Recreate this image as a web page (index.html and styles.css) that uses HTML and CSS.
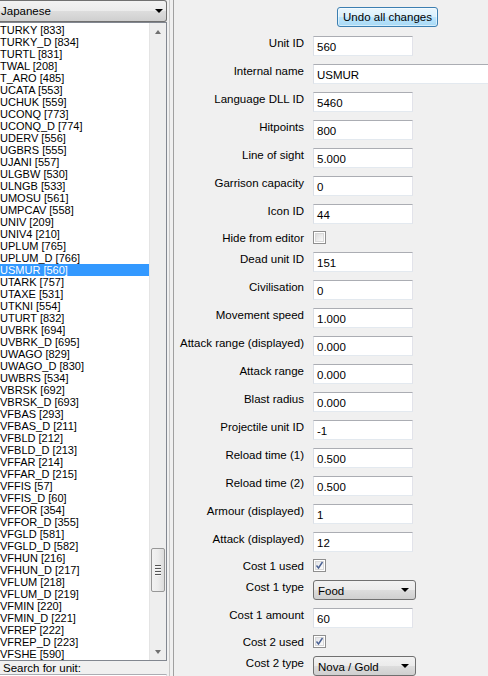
FILE: index.html
```html
<!DOCTYPE html>
<html>
<head>
<meta charset="utf-8">
<link rel="stylesheet" href="styles.css">
</head>
<body>
<div class="app">
  <div class="left">
    <div class="combo lang">
      <span class="combo-text">Japanese</span>
      <span class="arrow"></span>
    </div>
    <div class="list">
      <div class="items">
        <div class="item">TURKY [833]</div>
        <div class="item">TURKY_D [834]</div>
        <div class="item">TURTL [831]</div>
        <div class="item">TWAL [208]</div>
        <div class="item">T_ARO [485]</div>
        <div class="item">UCATA [553]</div>
        <div class="item">UCHUK [559]</div>
        <div class="item">UCONQ [773]</div>
        <div class="item">UCONQ_D [774]</div>
        <div class="item">UDERV [556]</div>
        <div class="item">UGBRS [555]</div>
        <div class="item">UJANI [557]</div>
        <div class="item">ULGBW [530]</div>
        <div class="item">ULNGB [533]</div>
        <div class="item">UMOSU [561]</div>
        <div class="item">UMPCAV [558]</div>
        <div class="item">UNIV [209]</div>
        <div class="item">UNIV4 [210]</div>
        <div class="item">UPLUM [765]</div>
        <div class="item">UPLUM_D [766]</div>
        <div class="item selected">USMUR [560]</div>
        <div class="item">UTARK [757]</div>
        <div class="item">UTAXE [531]</div>
        <div class="item">UTKNI [554]</div>
        <div class="item">UTURT [832]</div>
        <div class="item">UVBRK [694]</div>
        <div class="item">UVBRK_D [695]</div>
        <div class="item">UWAGO [829]</div>
        <div class="item">UWAGO_D [830]</div>
        <div class="item">UWBRS [534]</div>
        <div class="item">VBRSK [692]</div>
        <div class="item">VBRSK_D [693]</div>
        <div class="item">VFBAS [293]</div>
        <div class="item">VFBAS_D [211]</div>
        <div class="item">VFBLD [212]</div>
        <div class="item">VFBLD_D [213]</div>
        <div class="item">VFFAR [214]</div>
        <div class="item">VFFAR_D [215]</div>
        <div class="item">VFFIS [57]</div>
        <div class="item">VFFIS_D [60]</div>
        <div class="item">VFFOR [354]</div>
        <div class="item">VFFOR_D [355]</div>
        <div class="item">VFGLD [581]</div>
        <div class="item">VFGLD_D [582]</div>
        <div class="item">VFHUN [216]</div>
        <div class="item">VFHUN_D [217]</div>
        <div class="item">VFLUM [218]</div>
        <div class="item">VFLUM_D [219]</div>
        <div class="item">VFMIN [220]</div>
        <div class="item">VFMIN_D [221]</div>
        <div class="item">VFREP [222]</div>
        <div class="item">VFREP_D [223]</div>
        <div class="item">VFSHE [590]</div>
      </div>
      <div class="scrollbar">
        <div class="sb-btn"><span class="tri-up"></span></div>
        <div class="sb-track">
          <div class="thumb">
            <span class="grip"></span><span class="grip"></span><span class="grip"></span><span class="grip"></span>
          </div>
        </div>
        <div class="sb-btn"><span class="tri-down"></span></div>
      </div>
    </div>
    <div class="search-label">Search for unit:</div>
    <div class="search-box"></div>
  </div>
  <div class="splitter"></div>
  <div class="right">
    <div class="btn-row"><div class="button">Undo all changes</div></div>
    <div class="form">
      <div class="lbl">Unit ID</div><div class="field">560</div>
      <div class="lbl">Internal name</div><div class="field wide">USMUR</div>
      <div class="lbl">Language DLL ID</div><div class="field">5460</div>
      <div class="lbl">Hitpoints</div><div class="field">800</div>
      <div class="lbl">Line of sight</div><div class="field">5.000</div>
      <div class="lbl">Garrison capacity</div><div class="field">0</div>
      <div class="lbl">Icon ID</div><div class="field">44</div>
      <div class="lbl chk-lbl">Hide from editor</div><div class="chk-cell"><span class="check"></span></div>
      <div class="lbl">Dead unit ID</div><div class="field">151</div>
      <div class="lbl">Civilisation</div><div class="field">0</div>
      <div class="lbl">Movement speed</div><div class="field">1.000</div>
      <div class="lbl">Attack range (displayed)</div><div class="field">0.000</div>
      <div class="lbl">Attack range</div><div class="field">0.000</div>
      <div class="lbl">Blast radius</div><div class="field">0.000</div>
      <div class="lbl">Projectile unit ID</div><div class="field">-1</div>
      <div class="lbl">Reload time (1)</div><div class="field">0.500</div>
      <div class="lbl">Reload time (2)</div><div class="field">0.500</div>
      <div class="lbl">Armour (displayed)</div><div class="field">1</div>
      <div class="lbl">Attack (displayed)</div><div class="field">12</div>
      <div class="lbl chk-lbl">Cost 1 used</div><div class="chk-cell"><span class="check on"><svg width="11" height="11" viewBox="0 0 11 11"><polyline points="2.5,5.5 4.5,8 8.5,2" fill="none" stroke="#4a6193" stroke-width="1.4"/></svg></span></div>
      <div class="lbl">Cost 1 type</div><div class="combo small"><span class="combo-text">Food</span><span class="arrow"></span></div>
      <div class="lbl">Cost 1 amount</div><div class="field">60</div>
      <div class="lbl chk-lbl">Cost 2 used</div><div class="chk-cell"><span class="check on"><svg width="11" height="11" viewBox="0 0 11 11"><polyline points="2.5,5.5 4.5,8 8.5,2" fill="none" stroke="#4a6193" stroke-width="1.4"/></svg></span></div>
      <div class="lbl">Cost 2 type</div><div class="combo small"><span class="combo-text">Nova / Gold</span><span class="arrow"></span></div>
    </div>
  </div>
</div>
</body>
</html>
```
FILE: styles.css
```css
html, body {
  margin: 0;
  padding: 0;
  width: 488px;
  height: 676px;
  overflow: hidden;
  background: #f0f0f0;
  font-family: "Liberation Sans", Arial, sans-serif;
  color: #000;
}
.app {
  display: flex;
  height: 676px;
  overflow: hidden;
}
.left {
  width: 167px;
  flex: none;
  display: flex;
  flex-direction: column;
}
.combo {
  box-sizing: border-box;
  display: flex;
  align-items: center;
  justify-content: space-between;
  border: 1px solid #707070;
  border-radius: 3px;
  background: linear-gradient(#f2f2f2 0%, #ebebeb 50%, #dddddd 50%, #cfcfcf 100%);
  font-size: 11.5px;
}
.combo .arrow {
  width: 0;
  height: 0;
  border-left: 4px solid transparent;
  border-right: 4px solid transparent;
  border-top: 4px solid #000;
}
.lang {
  height: 22px;
  border-left: none;
  border-radius: 0 3px 3px 0;
  padding: 0 3px 0 1px;
  font-size: 11.5px;
}
.list {
  box-sizing: border-box;
  height: 639px;
  border: 1px solid #828790;
  border-left: none;
  background: #fff;
  display: flex;
  overflow: hidden;
}
.items {
  width: 149px;
  padding-top: 1px;
  overflow: hidden;
}
.item {
  height: 12px;
  line-height: 12px;
  font-size: 11px;
  white-space: nowrap;
  padding-left: 0;
}
.item.selected {
  background: #3399ff;
  color: #fff;
}
.scrollbar {
  width: 17px;
  flex: none;
  display: flex;
  flex-direction: column;
  background: #eeeeee;
  border-left: 1px solid #e4e4e4;
  box-sizing: border-box;
}
.sb-btn {
  height: 17px;
  flex: none;
  display: flex;
  align-items: center;
  justify-content: center;
}
.tri-up {
  width: 0;
  height: 0;
  border-left: 3.5px solid transparent;
  border-right: 3.5px solid transparent;
  border-bottom: 4px solid #707070;
}
.tri-down {
  width: 0;
  height: 0;
  border-left: 3.5px solid transparent;
  border-right: 3.5px solid transparent;
  border-top: 4px solid #707070;
}
.sb-track {
  flex: 1;
  display: flex;
  flex-direction: column;
  justify-content: flex-end;
  padding-bottom: 51px;
}
.thumb {
  box-sizing: border-box;
  height: 44px;
  margin: 0 1px 0 1px;
  border: 1px solid #979797;
  border-radius: 2px;
  background: linear-gradient(90deg, #f2f2f2 0%, #ececec 50%, #dcdcdc 100%);
  display: flex;
  flex-direction: column;
  align-items: center;
  justify-content: center;
  gap: 1px;
}
.grip {
  width: 6px;
  height: 1px;
  background: #555;
  border-bottom: 1px solid #f8f8f8;
}
.search-label {
  height: 12px;
  line-height: 12px;
  font-size: 11.5px;
  padding-left: 3px;
  margin-top: 1px;
}
.search-box {
  flex: 1;
  border-top: 1px solid #abadb3;
  border-right: 1px solid #dbdfe6;
  background: #fff;
}
.splitter {
  width: 6px;
  flex: none;
  box-sizing: border-box;
  border-left: 2px solid #f0f0f0;
  background: linear-gradient(90deg, #c8c8c8 0, #c8c8c8 1px, #f0f0f0 1px);
}
.right {
  flex: 1;
  border-left: 1px solid #a0a0a0;
  padding-top: 7px;
  min-width: 0;
  overflow: hidden;
}
.btn-row {
  display: flex;
  padding-left: 163px;
}
.button {
  box-sizing: border-box;
  width: 101px;
  height: 20px;
  border: 1px solid #3c7fb1;
  border-radius: 3px;
  background: linear-gradient(#eaf6fd 0%, #d9f0fc 50%, #bee6fd 50%, #a7d9f5 100%);
  font-size: 11.5px;
  line-height: 18px;
  text-align: center;
  box-shadow: inset 0 0 0 1px rgba(255,255,255,0.5);
}
.form {
  margin-top: 9px;
  display: grid;
  grid-template-columns: 130px 1fr;
  column-gap: 9px;
  row-gap: 8px;
}
.lbl {
  text-align: right;
  font-size: 11.5px;
  line-height: 14px;
  white-space: nowrap;
}
.chk-lbl {
  height: 12px;
  line-height: 12px;
}
.field {
  box-sizing: border-box;
  width: 100px;
  height: 20px;
  border: 1px solid;
  border-color: #abadb3 #e2e3ea #e3e9ef #dbdfe6;
  background: #fff;
  font-size: 11.5px;
  line-height: 14px;
  padding: 3px 3px 1px 3px;
  white-space: nowrap;
}
.field.wide {
  width: 220px;
}
.chk-cell {
  height: 12px;
}
.check {
  box-sizing: border-box;
  display: block;
  width: 13px;
  height: 13px;
  margin-top: -1px;
  border: 1px solid #8f8f8f;
  background: #fff;
  box-shadow: inset 0 0 0 1px #fff, inset 0 0 0 2px #d8d8d8;
  background-image: linear-gradient(135deg, #dcdcdc, #fafafa);
  background-size: 7px 7px;
  background-position: 2px 2px;
  background-repeat: no-repeat;
  position: relative;
}
.check.on {
  background-image: linear-gradient(135deg, #e4e6ea, #fbfbfb);
}
.check svg {
  position: absolute;
  left: 0;
  top: 0;
}
.combo.small {
  width: 103px;
  height: 20px;
  padding: 0 6px 0 4px;
}
.combo.small .combo-text {
  padding-top: 1px;
}
```
